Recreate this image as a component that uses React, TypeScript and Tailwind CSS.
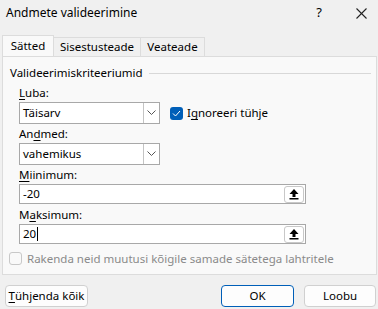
import React from 'react';

const font = { fontFamily: '"Segoe UI", "Noto Sans", "Open Sans", sans-serif' };

function Chevron() {
  return (
    <svg width="9" height="6" viewBox="0 0 9 6" fill="none" stroke="#555" strokeWidth="1">
      <polyline points="0.5 0.5 4.5 4.5 8.5 0.5" />
    </svg>
  );
}

function UpArrow() {
  return (
    <svg width="10" height="12" viewBox="0 0 10 12" fill="#000">
      <polygon points="5 1 9.5 6 6.5 6 6.5 9 3.5 9 3.5 6 0.5 6" />
      <rect x="0.5" y="10" width="9" height="1.5" />
    </svg>
  );
}

function Select({ value }: { value: string }) {
  return (
    <div className="flex h-[22px] w-[141px] items-stretch border border-[#a8a8a8] bg-white">
      <div className="flex flex-1 items-center pl-[3px] text-black">{value}</div>
      <div className="flex w-[16px] items-center justify-center border-l border-[#c4c4c4] bg-white">
        <Chevron />
      </div>
    </div>
  );
}

function RangeInput({ value, caret }: { value: string; caret?: boolean }) {
  return (
    <div className="flex h-[20px] w-[287px] items-center border border-[#a8a8a8] bg-white pl-[3px] pr-[1px]">
      <div className="flex flex-1 items-center text-black">
        {value}
        {caret && <span className="ml-[1px] inline-block h-[14px] w-px bg-black" />}
      </div>
      <div className="flex h-[17px] w-[20px] items-center justify-center rounded-[3px] border border-[#c8c8c8] bg-white">
        <UpArrow />
      </div>
    </div>
  );
}

export default function App() {
  return (
    <div className="flex h-[309px] w-[378px] flex-col overflow-hidden bg-[#f0f0f0] text-[11.5px] text-black" style={font}>
      {/* Title bar */}
      <div className="flex h-[32px] items-center pl-[6px]">
        <span className="-mt-[6px] flex-1 text-[12px]">Andmete valideerimine</span>
        <span className="-mt-[6px] mr-[34px] text-[13px]">?</span>
        <svg className="-mt-[6px] mr-[11px]" width="11" height="11" viewBox="0 0 11 11" stroke="#222" strokeWidth="1.1">
          <line x1="0.5" y1="0.5" x2="10.5" y2="10.5" />
          <line x1="10.5" y1="0.5" x2="0.5" y2="10.5" />
        </svg>
      </div>

      {/* Tabs */}
      <div className="mt-[4px] flex h-[20px] items-end pl-[2px]">
        <div className="relative z-10 flex h-[21px] w-[52px] items-center justify-center border border-b-0 border-[#dcdcdc] bg-[#f9f9f9]">
          Sätted
        </div>
        <div className="flex h-[19px] w-[87px] items-center justify-center border border-l-0 border-b-0 border-[#dcdcdc]">
          Sisestusteade
        </div>
        <div className="flex h-[19px] w-[64px] items-center justify-center border border-l-0 border-b-0 border-[#dcdcdc]">
          Veateade
        </div>
      </div>

      {/* Panel */}
      <div className="mx-[2px] flex h-[219px] w-[375px] flex-col border border-[#dcdcdc] bg-[#f9f9f9]">
        <div className="mt-[8px] flex h-[16px] items-center pl-[7px] pr-[5px]">
          <span>Valideerimiskriteeriumid</span>
          <div className="ml-[6px] h-px flex-1 bg-[#d8d8d8]" />
        </div>

        <div className="mt-[4px] pl-[16px]">
          <div className="h-[16px] leading-[16px]">
            <span className="underline underline-offset-2">L</span>uba:
          </div>
          <div className="mt-[1px] flex items-center">
            <Select value="Täisarv" />
            <div className="ml-[10px] flex h-[13px] w-[13px] items-center justify-center rounded-[3px] bg-[#005fb8]">
              <svg width="9" height="7" viewBox="0 0 9 7" fill="none" stroke="#fff" strokeWidth="1">
                <polyline points="1 3.5 3.5 6 8 1" />
              </svg>
            </div>
            <span className="ml-[4px]">
              I<span className="underline underline-offset-2">g</span>noreeri tühje
            </span>
          </div>

          <div className="mt-[2px] h-[16px] leading-[16px]">
            An<span className="underline underline-offset-2">d</span>med:
          </div>
          <div className="mt-[1px]">
            <Select value="vahemikus" />
          </div>

          <div className="mt-[2px] h-[16px] leading-[16px]">
            <span className="underline underline-offset-2">M</span>iinimum:
          </div>
          <div className="mt-[1px]">
            <RangeInput value="-20" />
          </div>

          <div className="mt-[3px] h-[16px] leading-[16px]">
            M<span className="underline underline-offset-2">a</span>ksimum:
          </div>
          <div className="mt-[1px]">
            <RangeInput value="20" caret />
          </div>
        </div>

        <div className="mt-[6px] flex items-center pl-[6px] text-[#8a8a8a]">
          <div className="h-[13px] w-[13px] rounded-[3px] border border-[#c8c8c8] bg-[#f9f9f9]" />
          <span className="ml-[5px]">Rakenda neid muutusi kõigile samade sätetega lahtritele</span>
        </div>
      </div>

      {/* Buttons */}
      <div className="mt-[10px] flex items-center pl-[5px] pr-[2px]">
        <button className="flex h-[22px] w-[83px] items-center justify-center rounded-[4px] border border-[#d0d0d0] bg-[#fdfdfd]">
          <span className="underline underline-offset-2">T</span>ühjenda kõik
        </button>
        <div className="flex-1" />
        <button className="flex h-[22px] w-[73px] items-center justify-center rounded-[4px] border border-[#005fb8] bg-[#fdfdfd]">
          OK
        </button>
        <button className="ml-[10px] flex h-[22px] w-[72px] items-center justify-center rounded-[4px] border border-[#d0d0d0] bg-[#fdfdfd]">
          Loobu
        </button>
      </div>
    </div>
  );
}
